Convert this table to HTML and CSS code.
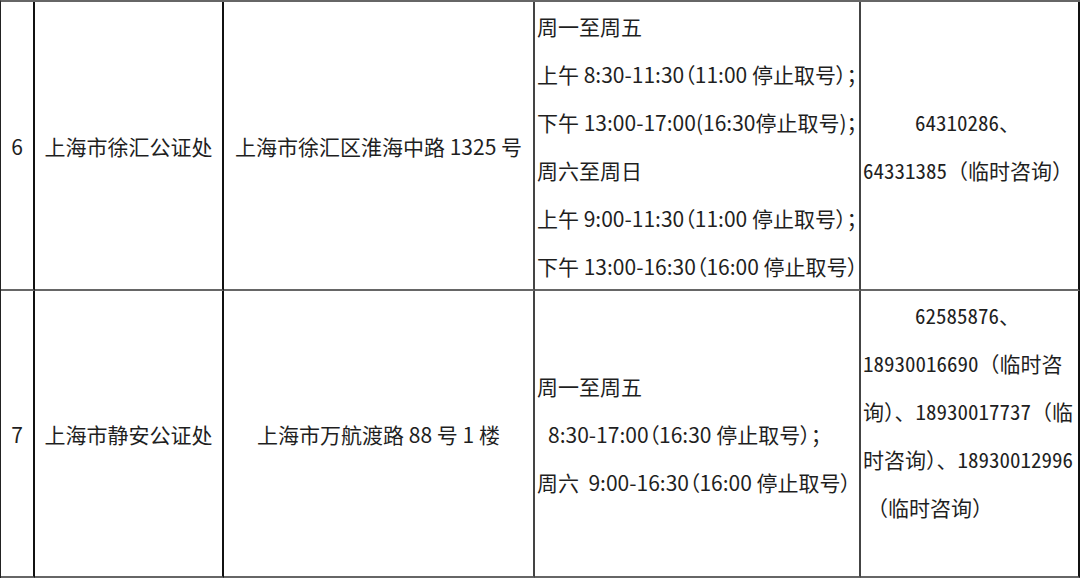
FILE: index.html
```html
<!DOCTYPE html>
<html lang="zh-CN">
<head>
<meta charset="utf-8">
<title>公证处</title>
<link rel="stylesheet" href="styles.css">
</head>
<body>
<div class="table">
  <div class="cell c1 center">6</div>
  <div class="cell c2 center">上海市徐汇公证处</div>
  <div class="cell c3 center">上海市徐汇区淮海中路 1325 号</div>
  <div class="cell c4 lines top">
    <div class="ln">周一至周五</div>
    <div class="ln">上午 8:30-11:30（11:00 停止取号）；</div>
    <div class="ln">下午 13:00-17:00(16:30停止取号)；</div>
    <div class="ln">周六至周日</div>
    <div class="ln">上午 9:00-11:30（11:00 停止取号）；</div>
    <div class="ln">下午 13:00-16:30（16:00 停止取号）</div>
  </div>
  <div class="cell c5 lines middle">
    <div class="ln indent"><span class="num">64310286</span>、</div>
    <div class="ln"><span class="num">64331385</span>（临时咨询）</div>
  </div>

  <div class="cell c1 center">7</div>
  <div class="cell c2 center">上海市静安公证处</div>
  <div class="cell c3 center">上海市万航渡路 88 号 1 楼</div>
  <div class="cell c4 lines middle">
    <div class="ln">周一至周五</div>
    <div class="ln small-indent">8:30-17:00（16:30 停止取号）；</div>
    <div class="ln">周六 &nbsp;9:00-16:30（16:00 停止取号）</div>
  </div>
  <div class="cell c5 lines top">
    <div class="ln indent"><span class="num">62585876</span>、</div>
    <div class="ln"><span class="num">18930016690</span>（临时咨</div>
    <div class="ln">询）、<span class="num">18930017737</span>（临</div>
    <div class="ln">时咨询）、<span class="num">18930012996</span></div>
    <div class="ln tiny-indent">（临时咨询）</div>
  </div>
</div>
</body>
</html>
```

FILE: styles.css
```css
html, body {
  margin: 0;
  padding: 0;
  background: #ffffff;
}

body {
  width: 1080px;
  height: 578px;
  overflow: hidden;
  font-family: "Noto Sans CJK SC", "Noto Sans", sans-serif;
  font-size: 21px;
  color: #1f1f1f;
}

.table {
  display: grid;
  grid-template-columns: 34px 189px 311px 326px 219px;
  grid-template-rows: 289px 287px;
  border-top: 2px solid #666666;
  border-left: 1px solid #222222;
  width: 1080px;
  box-sizing: border-box;
}

.cell {
  box-sizing: border-box;
  border-bottom: 2px solid #666666;
  border-right: 2px solid #111111;
  overflow: hidden;
}

.c3, .c4 {
  border-right-color: #444444;
}

.center {
  display: flex;
  align-items: center;
  justify-content: center;
  white-space: nowrap;
}

.lines {
  display: flex;
  flex-direction: column;
  padding-left: 2px;
}

.lines.top {
  justify-content: flex-start;
}

.lines.middle {
  justify-content: center;
}

.ln {
  line-height: 48px;
  white-space: nowrap;
}

.c4 .ln {
  font-feature-settings: "palt" 1;
}

.num {
  font-feature-settings: "hwid" 1;
}

.indent {
  margin-left: 52px;
}

.small-indent {
  margin-left: 11px;
}

.tiny-indent {
  margin-left: 4px;
}
```
